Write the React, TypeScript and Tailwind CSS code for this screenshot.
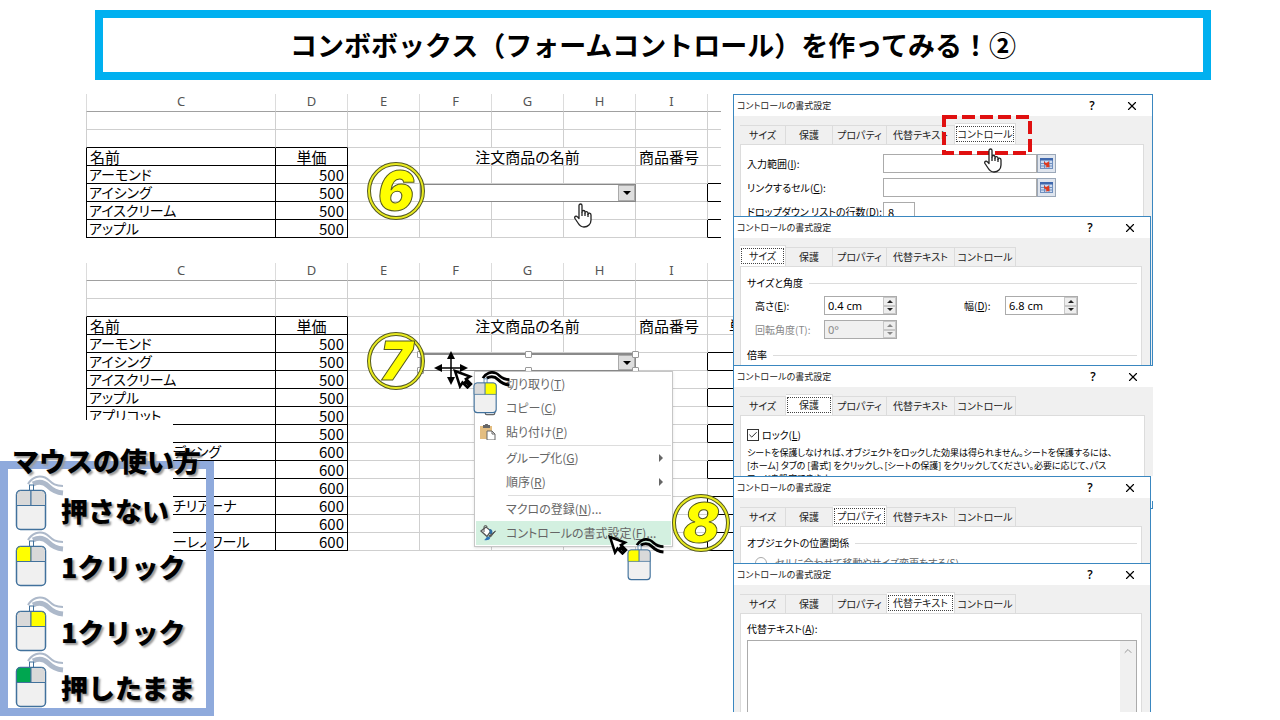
import { useState } from 'react';
import type { ReactNode } from 'react';
import clsx from 'clsx';
import { Check, ChevronUp, Copy, X } from 'lucide-react';

const TABS = ['サイズ', '保護', 'プロパティ', '代替テキスト', 'コントロール'];
const TAB_WIDTHS = ['w-[46px]', 'w-[47px]', 'w-[54px]', 'w-[68px]', 'w-[61px]'];

type Item = { name: string; price: string; tail?: boolean };

const SHORT_LIST: Item[] = [
  { name: 'アーモンド', price: '500' },
  { name: 'アイシング', price: '500' },
  { name: 'アイスクリーム', price: '500' },
  { name: 'アップル', price: '500' },
];

const LONG_LIST: Item[] = [
  ...SHORT_LIST,
  { name: 'アプリコット', price: '500' },
  { name: '', price: '500' },
  { name: 'ディング', price: '600', tail: true },
  { name: '', price: '600' },
  { name: '', price: '600' },
  { name: 'チリアーナ', price: '600', tail: true },
  { name: '', price: '600' },
  { name: 'ーレノワール', price: '600', tail: true },
];

function Handle({ className }: { className: string }) {
  return <span className={clsx('absolute size-[7px] rounded-[1px] border border-[#999] bg-white', className)} />;
}

function ComboBox({ selected }: { selected?: boolean }) {
  return (
    <div className={clsx('relative flex h-[18px] border bg-white', selected ? 'border-t-2 border-[#8a8a8a]' : 'border-[#888]')}>
      <select aria-label="注文商品の名前" className="min-w-0 flex-1 appearance-none bg-white outline-none" />
      <span className="flex w-[17px] items-center justify-center border border-[#aaa] bg-[#dedede]">
        <svg viewBox="0 0 8 4" className="h-1 w-2">
          <path d="M0 0h8L4 4z" fill="#000" />
        </svg>
      </span>
      {selected && (
        <>
          <Handle className="-top-1 -left-1" />
          <Handle className="-top-1 left-[104px]" />
          <Handle className="-top-1 -right-1" />
          <Handle className="-bottom-1 -left-1" />
          <Handle className="-bottom-1 left-[104px]" />
          <Handle className="-right-1 -bottom-1" />
        </>
      )}
    </div>
  );
}

function Sheet({ items, wide, selected }: { items: Item[]; wide?: boolean; selected?: boolean }) {
  const cell = 'h-[18px] border-r border-b p-0 whitespace-nowrap';
  const grid = 'border-[#cfcfcf]';
  const black = 'border-black';
  return (
    <table
      className={clsx(
        'table-fixed border-separate border-spacing-0 text-[15px] leading-[17px] text-black [font-feature-settings:"palt"]',
        wide ? 'w-[647px]' : 'w-[635px]',
      )}
    >
      <colgroup>
        <col className="w-[190px]" />
        <col className="w-[72px]" />
        <col className="w-[72px]" />
        <col className="w-[72px]" />
        <col className="w-[72px]" />
        <col className="w-[72px]" />
        <col className="w-[72px]" />
        <col />
      </colgroup>
      <thead>
        <tr>
          {['C', 'D', 'E', 'F', 'G', 'H', 'I', ''].map((c, i) => (
            <th
              key={i}
              className={clsx(
                'h-[18px] border-b border-b-[#a0a0a0] p-0 pb-0.5 font-["Noto_Sans"] text-[13px] leading-[15px] font-normal text-[#555]',
                i < 7 && 'border-r border-r-[#dcdcdc]',
                i === 0 && 'border-l border-l-[#dcdcdc]',
              )}
            >
              {c}
            </th>
          ))}
        </tr>
      </thead>
      <tbody>
        {[0, 1].map((r) => (
          <tr key={r}>
            {[0, 1, 2, 3, 4, 5, 6, 7].map((c) => (
              <td
                key={c}
                className={clsx(
                  cell,
                  grid,
                  c === 0 && 'border-l',
                  c === 7 && 'border-r-0',
                  r === 1 && c < 2 && 'border-b-black',
                )}
              />
            ))}
          </tr>
        ))}
        <tr>
          <td className={clsx(cell, black, 'border-l pl-[3px]')}>名前</td>
          <td className={clsx(cell, black, 'text-center')}>単価</td>
          <td className={clsx(cell, grid)} />
          <td colSpan={3} className={clsx(cell, grid, 'text-center')}>
            注文商品の名前
          </td>
          <td className={clsx(cell, grid, 'pl-[3px]')}>商品番号</td>
          <td className={clsx(cell, grid, 'border-r-0 pl-[21px]')}>{wide ? '単価' : ''}</td>
        </tr>
        {items.map((item, r) => {
          const boxed = r % 2 === 1;
          return (
            <tr key={r}>
              <td className={clsx(cell, black, 'border-l text-[14px]', item.tail ? 'pl-[86px]' : 'pl-[2px]')}>{item.name}</td>
              <td className={clsx(cell, black, 'pr-[3px] text-right')}>{item.price}</td>
              <td className={clsx(cell, grid)} />
              {r === 1 ? (
                <td colSpan={3} className="h-[18px] p-0">
                  <ComboBox selected={selected} />
                </td>
              ) : (
                <>
                  <td className={clsx(cell, grid)} />
                  <td className={clsx(cell, grid)} />
                  <td className={clsx(cell, grid)} />
                </>
              )}
              <td className={clsx(cell, grid, boxed && 'border-r-black')} />
              <td className={clsx(cell, 'border-r-0 border-b-black')} />
            </tr>
          );
        })}
      </tbody>
    </table>
  );
}

function Dialog({ tab, className, children }: { tab: number; className: string; children: ReactNode }) {
  const [active, setActive] = useState(tab);
  return (
    <section className={clsx('relative overflow-hidden border-t border-l border-[#3a87c0] bg-[#f0f0f0] px-1.5', className)}>
      <div className="-mx-1.5 flex h-[21px] items-center bg-white pr-[13px] pl-[3px]">
        <h2 className="flex-1 text-[9px] text-[#222]">コントロールの書式設定</h2>
        <button className="w-3 font-['Open_Sans'] text-xs font-semibold">?</button>
        <button aria-label="閉じる" className="ml-[27px]">
          <X className="size-[14px]" strokeWidth={2} />
        </button>
      </div>
      <div className="flex h-7 items-end">
        {TABS.map((t, i) => (
          <button
            key={t}
            onClick={() => setActive(i)}
            className={clsx(
              'border-t border-r border-[#dcdcdc] text-center whitespace-nowrap text-[#222]',
              TAB_WIDTHS[i],
              i === active ? 'h-[21px] bg-white px-px pt-px pb-0.5' : 'h-[19px]',
            )}
          >
            <span className={clsx('block', i === active && 'border border-dotted border-[#444] leading-[14px]')}>{t}</span>
          </button>
        ))}
      </div>
      <div className="mr-0.5 h-[400px] border border-t-[#dcdcdc] border-r-[#dcdcdc] border-l-[#dcdcdc] bg-white pr-1 pl-1.5">
        {children}
      </div>
    </section>
  );
}

function RefField({ id, label }: { id: string; label: ReactNode }) {
  return (
    <div className="mb-[5px] flex h-[19px] items-center">
      <label htmlFor={id} className="w-[136px]">
        {label}
      </label>
      <input id={id} className="h-[19px] w-[154px] border border-[#ababab] bg-white px-1" />
      <button aria-label="セル範囲の選択" className="flex h-[19px] w-[19px] items-center justify-center border border-[#9aa7b8] bg-[#dfe5ee]">
        <svg viewBox="0 0 13 11" className="h-[11px] w-[13px]">
          <rect x="0.5" y="0.5" width="12" height="10" fill="#cfdcf0" stroke="#6f8fbf" />
          <path d="M0 1.5h13M4.500 3v8M9 3v8M1 5.500h11M1 8h11" stroke="#6f8fbf" />
          <rect x="0" y="0" width="13" height="2.500" fill="#3f68ad" />
          <path d="M4 3.500l2 1.500 3-1.500.500 5.500-4 .500 1.200-1.500L4 6z" fill="#e03a1e" />
        </svg>
      </button>
    </div>
  );
}

type SpinnerProps = { id: string; label: ReactNode; value: string; width: string; disabled?: boolean };

function Spinner({ id, label, value, width, disabled }: SpinnerProps) {
  return (
    <div className={clsx('flex h-[19px] items-center', disabled && 'text-[#888]')}>
      <label htmlFor={id} className={width}>
        {label}
      </label>
      <div className={clsx('flex h-[19px] w-[73px] border border-[#ababab]', disabled ? 'bg-[#f0f0f0]' : 'bg-white')}>
        <input id={id} defaultValue={value} disabled={disabled} className="min-w-0 flex-1 px-[3px] font-['Noto_Sans'] text-[11px] outline-none" />
        <div className="flex w-[13px] flex-col">
          {[
            { name: '増やす', d: 'M0 3h6L3 0z' },
            { name: '減らす', d: 'M0 0h6L3 3z' },
          ].map(({ name, d }) => (
            <button key={name} aria-label={name} disabled={disabled} className="flex flex-1 items-center justify-center border border-[#c8c8c8] bg-[#eee]">
              <svg viewBox="0 0 6 3" className="h-[3px] w-1.5">
                <path d={d} fill={disabled ? '#888' : '#222'} />
              </svg>
            </button>
          ))}
        </div>
      </div>
    </div>
  );
}

function GroupTitle({ children }: { children: ReactNode }) {
  return (
    <div className="flex h-4 items-center gap-1.5">
      {children}
      <span className="h-px flex-1 bg-[#dcdcdc]" />
    </div>
  );
}

type MouseProps = { left?: string; right?: string; dark?: boolean; className: string };

function Mouse({ left = '#d9d9d9', right = '#d9d9d9', dark, className }: MouseProps) {
  const cable = dark ? '#000' : '#adb9ca';
  return (
    <svg viewBox="0 0 50 56" fill="none" className={className}>
      <path d="M13 9C17 2 24 0 30 2.500C36 5 36 11 48 11" stroke={cable} strokeWidth={dark ? 3.5 : 2} />
      <path d="M18 9C24 6 29 7 33 11C37 15 42 17.500 48 18" stroke={cable} strokeWidth={dark ? 4 : 5} />
      <rect x="14.500" y="10" width="4" height="6" fill="#fff" stroke="#41719c" />
      <rect x="1.500" y="15.500" width="29" height="39" rx="4" fill="#f0f0f0" stroke="#41719c" strokeWidth="1.500" />
      <path d="M16 15.500V30.500H1.500V19.500a4 4 0 0 1 4-4z" fill={left} stroke="#41719c" />
      <path d="M16 15.500V30.500H30.500V19.500a4 4 0 0 0-4-4z" fill={right} stroke="#41719c" />
    </svg>
  );
}

function Hand({ className }: { className: string }) {
  return (
    <svg viewBox="0 0 18 25" fill="#fff" stroke="#222" strokeWidth="1.300" strokeLinejoin="round" className={className}>
      <path d="M5 14V2.500a1.500 1.500 0 0 1 3 0V9c0-2 3-2 3 0v1c0-2 3-1.600 3 .4v1c0-2 3-1.500 3 .6v5c0 4-3 7-7 7-3 0-4.500-1.500-6-4L1 15.500c-1-2 1-3 2.500-1.600L5 15.500z" />
      <path d="M8 9v4M11 10v3M14 11v3" />
    </svg>
  );
}

function Pointer({ className }: { className: string }) {
  return (
    <svg viewBox="0 0 20 20" className={className}>
      <path d="M2 2L17 7.500l-4 2.500 5 5-3.500 3.500-5-5L7 17.500z" fill="#fff" stroke="#000" strokeWidth="2.500" />
      <path d="M12 12l5 5M10.500 15l4.500-4.500" stroke="#000" strokeWidth="3" />
    </svg>
  );
}

function StepBadge({ step, className }: { step: number; className: string }) {
  return (
    <div className={clsx('absolute grid size-[58px] place-items-center', className)}>
      <svg viewBox="0 0 58 58" fill="none" className="col-start-1 row-start-1 size-[58px]">
        <circle cx="29" cy="29" r="27" stroke="#555a20" strokeWidth="4" />
        <circle cx="29" cy="29" r="27" stroke="#e8ea20" strokeWidth="2" />
      </svg>
      <span className="col-start-1 row-start-1 font-['Inter'] text-[54px] leading-[58px] font-black text-[#ff0] italic [-webkit-text-stroke:1px_#555a20]">
        {step}
      </span>
    </div>
  );
}

function PasteIcon() {
  return (
    <svg viewBox="0 0 16 16" className="size-4">
      <path d="M0 2h12v13H0z" fill="#e3bd80" />
      <path d="M3 1h2a1.500 1.500 0 0 1 3 0h2v3H3z" fill="#666" />
      <path d="M7 7h5l3 3v6H7z" fill="#fff" stroke="#666" />
      <path d="M12 7v3h3" fill="none" stroke="#666" />
    </svg>
  );
}

function FormatIcon() {
  return (
    <svg viewBox="0 0 16 16" className="size-4">
      <path d="M1 6l5-4 5 4-4 5.500z" fill="#fff" stroke="#555" strokeWidth="1.300" />
      <path d="M4 7V2a1.500 1.500 0 0 1 3 0" fill="none" stroke="#555" />
      <path d="M9 4c3 0 4 2 3 5l-2 0z" fill="#2e6da4" />
      <path d="M15.500 6l-5 6-1.500-1z" fill="#555" stroke="#555" />
      <path d="M4 15c2-.500 2-4 5-3.500 2 1 1.500 4.500-5 3.500z" fill="#2e75b6" />
    </svg>
  );
}

type MenuItemProps = { icon?: ReactNode; label: string; accel: string; dots?: boolean; sub?: boolean; hot?: boolean };

function MenuItem({ icon, label, accel, dots, sub, hot }: MenuItemProps) {
  return (
    <button className={clsx('flex h-6 w-full items-center text-left text-[12px] whitespace-nowrap text-[#666]', hot && 'bg-[#d3f0e0]')}>
      <span className="flex w-[30px] pl-1">{icon}</span>
      <span className="flex-1">
        {label}(<u>{accel}</u>){dots && '...'}
      </span>
      {sub && (
        <svg viewBox="0 0 4 8" className="mr-2 h-2 w-1">
          <path d="M0 0v8l4-4z" fill="#666" />
        </svg>
      )}
    </button>
  );
}

function ContextMenu() {
  return (
    <div className="absolute top-[371px] left-[474px] w-[199px] border border-[#c6c6c6] bg-white px-px pb-px shadow-sm [font-feature-settings:'palt']">
      <MenuItem label="切り取り" accel="T" />
      <MenuItem label="コピー" accel="C" icon={<Copy className="size-4" />} />
      <MenuItem label="貼り付け" accel="P" icon={<PasteIcon />} />
      <hr className="mt-px ml-8 border-[#ddd]" />
      <MenuItem label="グループ化" accel="G" sub />
      <MenuItem label="順序" accel="R" sub />
      <hr className="my-px ml-8 border-[#ddd]" />
      <MenuItem label="マクロの登録" accel="N" dots />
      <MenuItem label="コントロールの書式設定" accel="F" dots hot icon={<FormatIcon />} />
    </div>
  );
}

function MouseGuide() {
  const row = 'flex h-14 pl-[15px]';
  const text = '-ml-1 pt-4 text-[27px] leading-[40px]';
  return (
    <aside className="absolute top-[420px] left-0 w-[214px] font-black text-black [text-shadow:2px_2px_2px_#999]">
      <div className="absolute inset-y-0 left-0 w-[173px] bg-white" />
      <div className="relative pt-[41px]">
        <div className="border-8 border-[#8faadc]">
          <h2 className="-mt-7 ml-1 h-[34px] text-[27px] leading-[40px] whitespace-nowrap">マウスの使い方</h2>
          <div className="-ml-2">
            <div className={row}>
              <Mouse className="h-14 w-[50px]" />
              <p className={text}>押さない</p>
            </div>
            <div className={clsx(row, 'mb-[9px]')}>
              <Mouse left="#ffff00" className="h-14 w-[50px]" />
              <p className={text}>1クリック</p>
            </div>
            <div className={row}>
              <Mouse right="#ffff00" className="h-14 w-[50px]" />
              <p className={text}>1クリック</p>
            </div>
            <div className={row}>
              <Mouse left="#00a650" className="h-14 w-[50px]" />
              <p className={text}>押したまま</p>
            </div>
          </div>
        </div>
      </div>
    </aside>
  );
}

export default function App() {
  return (
    <div className="relative min-h-screen overflow-hidden bg-white pt-2.5 font-['Noto_Sans_CJK_JP',sans-serif] text-black">
      <header className="mr-[69px] ml-[95px] flex h-[70px] items-center justify-center border-8 border-[#00b0f0]">
        <h1 className="text-[27px] font-bold whitespace-nowrap">コンボボックス（フォームコントロール）を作ってみる！②</h1>
      </header>

      <main className="mt-[14px] mr-[127px] ml-[86px] flex">
        {/* Worksheets */}
        <div className="w-[647px] shrink-0">
          <Sheet items={SHORT_LIST} />
          <div className="h-[25px]" />
          <Sheet items={LONG_LIST} wide selected />
        </div>

        {/* Format control dialogs */}
        <div className="min-w-0 flex-1 text-[10px] leading-4 [font-feature-settings:'palt']">
          <Dialog tab={4} className="h-[122px] border-r">
            <div className="pt-[9px]">
              <RefField id="range" label={<>入力範囲(<u>I</u>):</>} />
              <RefField id="link" label={<>リンクするセル(<u>C</u>):</>} />
              <div className="flex h-[19px] items-center">
                <label htmlFor="lines" className="w-[136px] whitespace-nowrap">
                  ドロップダウン リストの行数(<u>D</u>):
                </label>
                <input id="lines" defaultValue="8" className="h-[19px] w-8 border border-[#ababab] bg-white px-1 text-[11px]" />
              </div>
            </div>
            <svg viewBox="0 0 92 40" fill="none" className="absolute top-5 left-[207px] h-10 w-[92px]">
              <rect x="3" y="2" width="86" height="36" stroke="#e01010" strokeWidth="4" strokeDasharray="13 5" />
            </svg>
            <Hand className="absolute top-[53px] left-[250px] h-[25px] w-[18px]" />
          </Dialog>

          <div className="border-r border-[#3a87c0] bg-[#f0f0f0] pr-px">
            <Dialog tab={0} className="h-[149px] border-r">
              <div className="pt-2">
                <GroupTitle>サイズと角度</GroupTitle>
                <div className="mt-[5px] flex gap-[67px] pl-2">
                  <Spinner id="height" label={<>高さ(<u>E</u>):</>} value="0.4 cm" width="w-[69px]" />
                  <Spinner id="width" label={<>幅(<u>D</u>):</>} value="6.8 cm" width="w-[41px]" />
                </div>
                <div className="mt-[5px] mb-2 pl-2">
                  <Spinner id="angle" label="回転角度(T):" value="0°" width="w-[69px]" disabled />
                </div>
                <GroupTitle>倍率</GroupTitle>
              </div>
            </Dialog>
          </div>

          <Dialog tab={1} className="h-[111px]">
            <label className="mt-[11px] flex h-4 items-center gap-[3px]">
              <span className="grid size-3 place-items-center">
                <input type="checkbox" defaultChecked className="peer col-start-1 row-start-1 size-3 appearance-none border border-[#333] bg-white" />
                <Check className="pointer-events-none invisible col-start-1 row-start-1 size-[10px] peer-checked:visible" />
              </span>
              <span>
                ロック(<u>L</u>)
              </span>
            </label>
            <p className="mt-[3px] text-[9px] leading-[13px] whitespace-nowrap">
              シートを保護しなければ、オブジェクトをロックした効果は得られません。シートを保護するには、
              <br />
              [ホーム] タブの [書式] をクリックし、[シートの保護] をクリックしてください。必要に応じて、パス
              <br />
              ワードを設定できます。
            </p>
          </Dialog>

          <div className="flex">
            <Dialog tab={2} className="h-[87px] flex-1 border-r">
              <div className="pt-2">
                <GroupTitle>オブジェクトの位置関係</GroupTitle>
                <label className="mt-1 flex items-center gap-2 pl-2 text-[#666]">
                  <input type="radio" name="placement" className="size-3 appearance-none rounded-full border border-[#aaa]" />
                  セルに合わせて移動やサイズ変更をする(S)
                </label>
              </div>
            </Dialog>
            <div className="mt-[25px] h-2 w-0.5 border-r border-b border-[#3a87c0]" />
          </div>

          <Dialog tab={3} className="mr-0.5 h-[149px] border-r">
            <label htmlFor="alt" className="mt-[7px] block">
              代替テキスト(<u>A</u>):
            </label>
            <div className="mt-[3px] flex h-[100px] border border-[#ababab]">
              <textarea id="alt" className="flex-1 resize-none bg-white outline-none" />
              <div className="flex w-4 justify-center bg-[#f0f0f0] pt-1">
                <ChevronUp className="size-3 text-[#999]" />
              </div>
            </div>
          </Dialog>
        </div>
      </main>

      {/* Everything that floats over the sheets */}
      <ContextMenu />
      <StepBadge step={6} className="top-[162px] left-[367px]" />
      <StepBadge step={7} className="top-[332px] left-[367px]" />
      <StepBadge step={8} className="top-[494px] left-[672px]" />
      <Hand className="absolute top-[203px] left-[574px] h-[25px] w-[18px]" />
      <svg viewBox="0 0 34 34" className="absolute top-[351px] left-[434px] size-[34px]">
        <path d="M17 4v26M4 17h26" stroke="#000" strokeWidth="1.500" />
        <path d="M17 0l4 8h-8zM17 34l4-8h-8zM0 17l8-4v8zM34 17l-8-4v8z" />
      </svg>
      <Pointer className="absolute top-[369px] left-[453px] size-5" />
      <Mouse right="#ffff00" dark className="absolute top-[371px] left-[473px] h-[43px] w-[38px]" />
      <Pointer className="absolute top-[535px] left-[608px] size-5" />
      <Mouse left="#ffff00" dark className="absolute top-[538px] left-[627px] h-[43px] w-[38px]" />
      <MouseGuide />
    </div>
  );
}
